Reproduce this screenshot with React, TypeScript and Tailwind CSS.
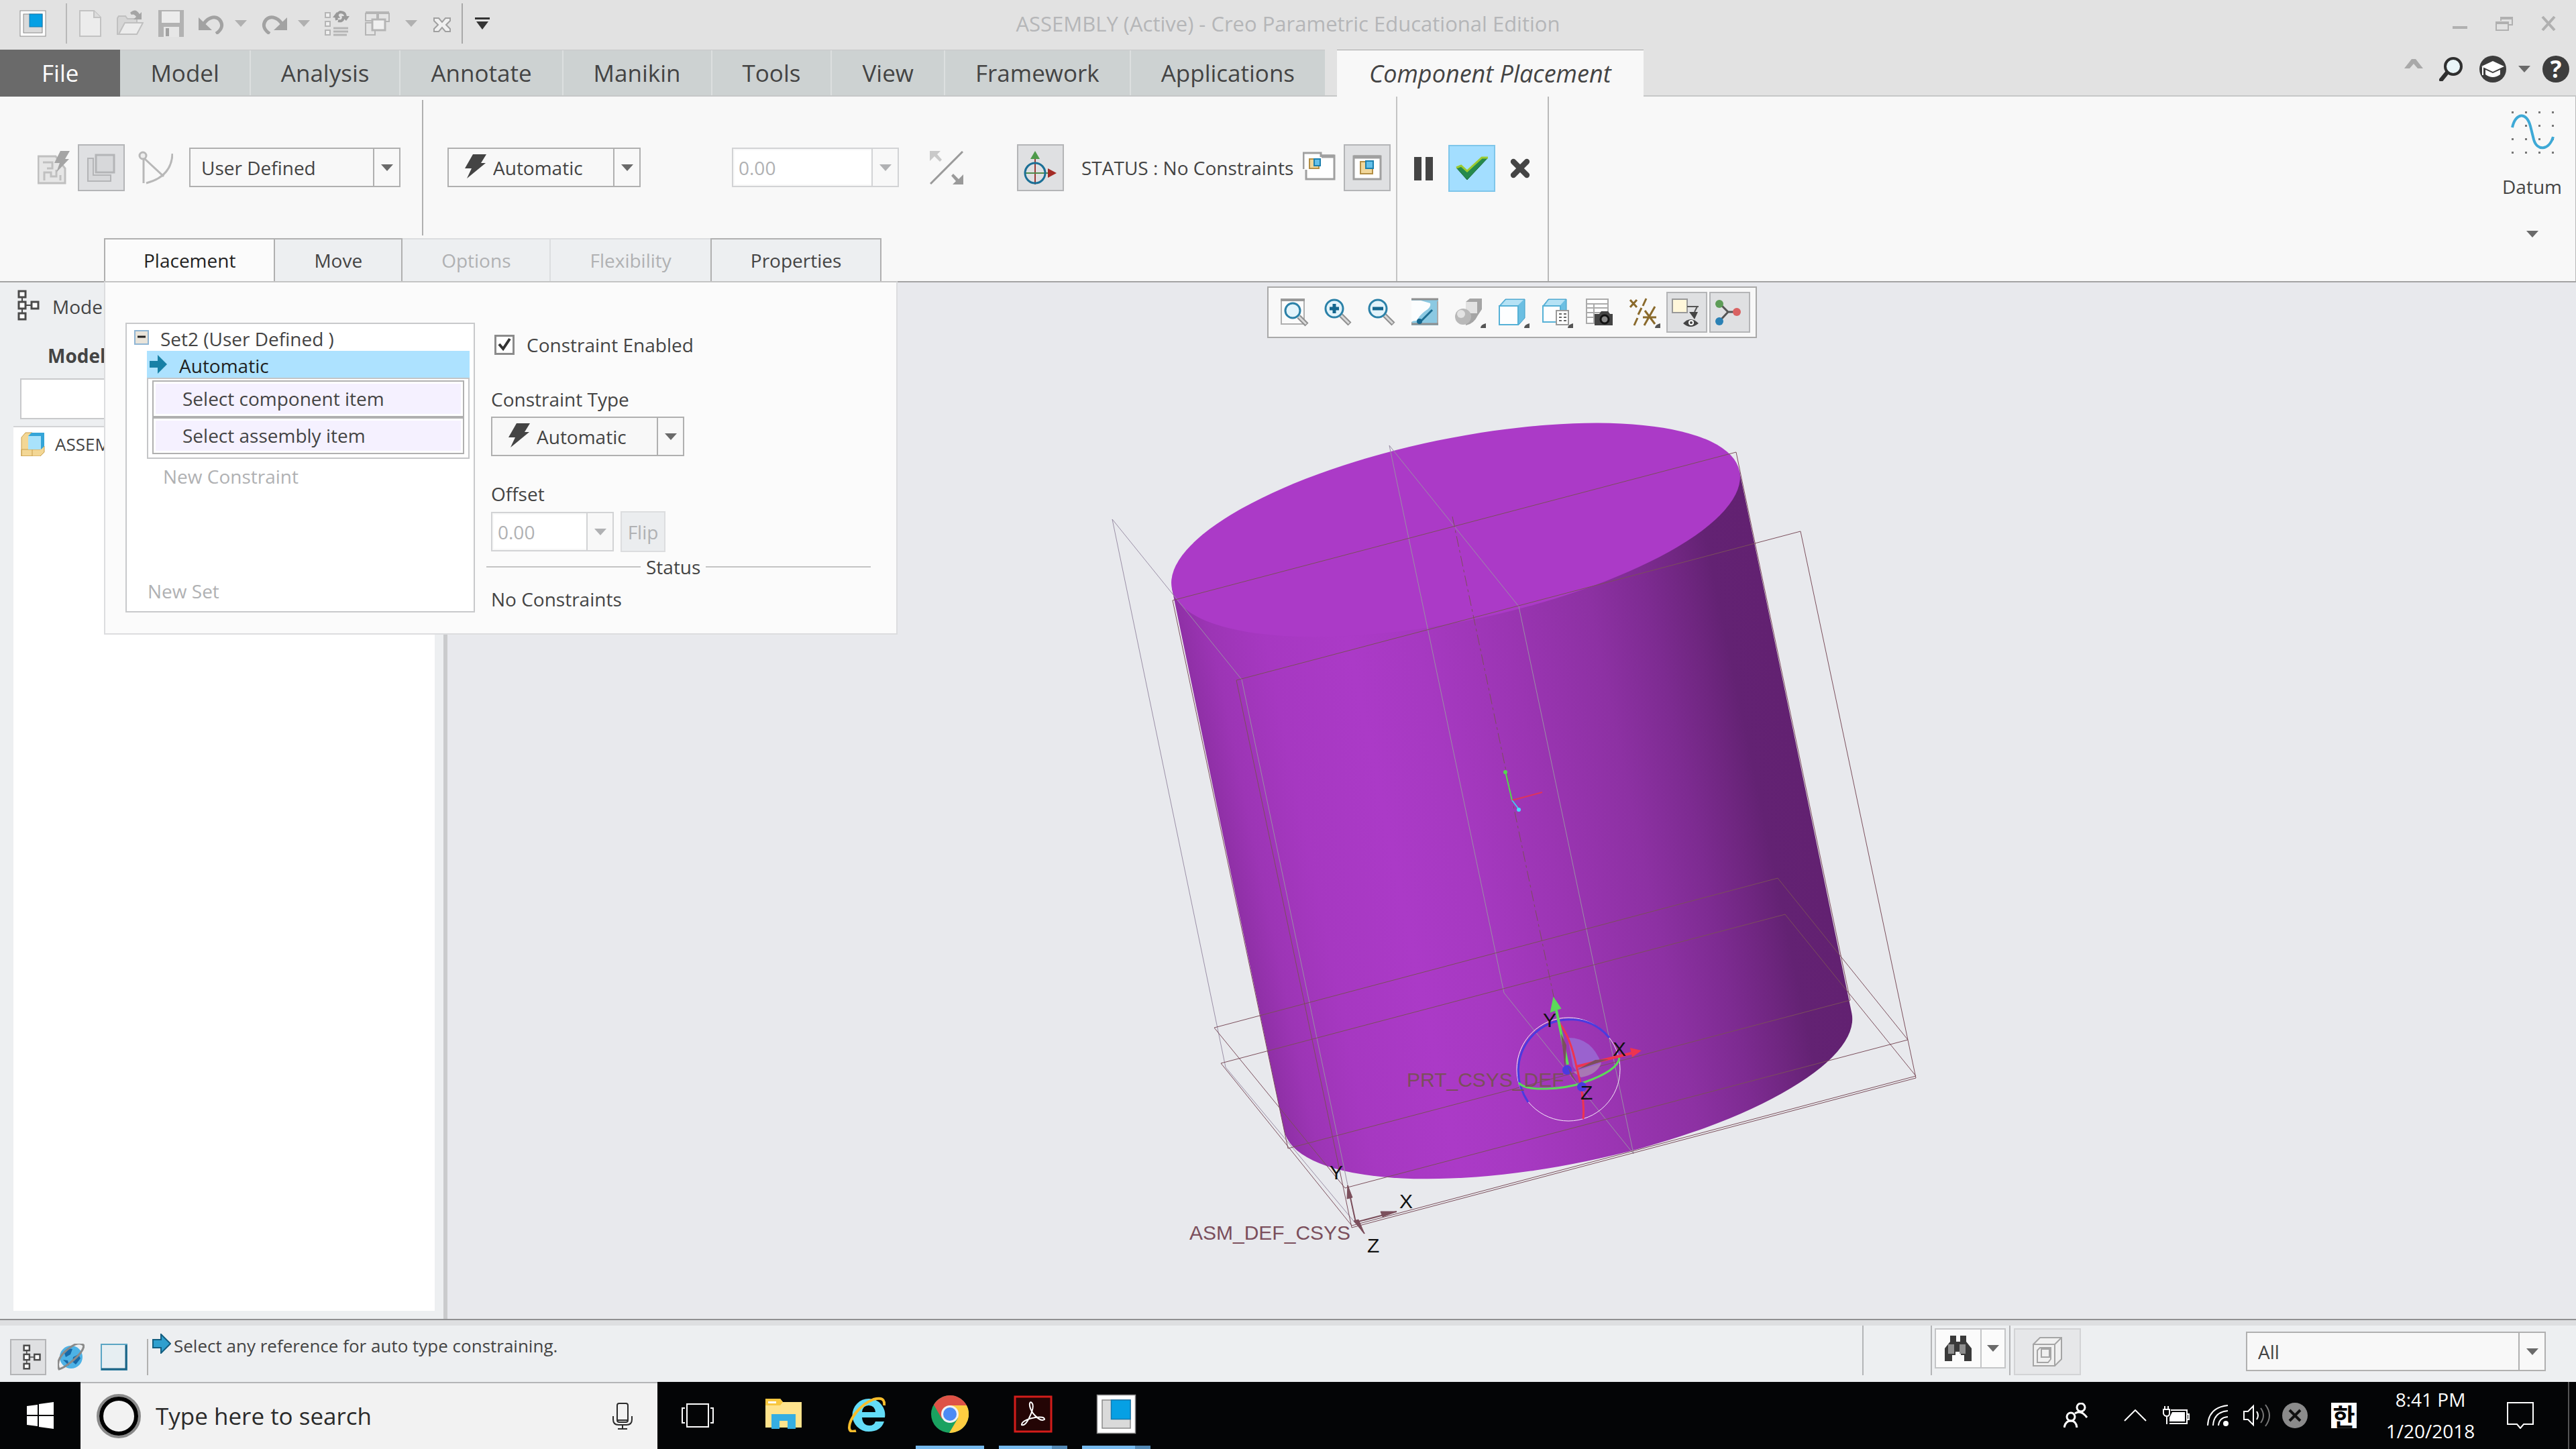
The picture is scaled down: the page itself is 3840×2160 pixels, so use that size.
import type { ReactNode } from 'react';
import { X } from 'lucide-react';

function Caret({ className = 'text-[#6a6a6a]' }: { className?: string }) {
  return (
    <svg viewBox="0 0 18 10" className={`w-[18px] h-[10px] shrink-0 ${className}`}>
      <path d="M0 0h18l-9 10z" fill="currentColor" />
    </svg>
  );
}

function Bolt() {
  return (
    <svg viewBox="0 0 32 36" className="w-8 h-9 shrink-0 mb-1">
      <path d="M12 0h20l-8 13h7L3 36l7-15H0z" fill="#444" />
    </svg>
  );
}

function CreoLogo({ className }: { className: string }) {
  return (
    <svg viewBox="0 0 40 40" className={className}>
      <rect x="1" y="1" width="38" height="38" fill="#fff" stroke="#8b8b8b" strokeWidth="1" />
      <rect x="6" y="6" width="28" height="28" fill="#dadada" stroke="#8a8a8a" strokeWidth="1" />
      <rect x="15" y="6" width="19" height="19" fill="#06a0e4" stroke="#147ab0" strokeWidth="1" />
    </svg>
  );
}

function TreeIcon({ className }: { className: string }) {
  return (
    <svg viewBox="0 0 34 46" className={className} fill="#fff" stroke="#4a4a4a" strokeWidth="3">
      <path d="M7 10v26M12 23h10" strokeWidth="2" />
      <rect x="2" y="2" width="10" height="9" />
      <rect x="2" y="18" width="10" height="10" />
      <rect x="21" y="18" width="10" height="10" />
      <rect x="2" y="35" width="10" height="9" />
    </svg>
  );
}

function Toggle({ label, children }: { label: string; children: ReactNode }) {
  return (
    <button aria-label={label} aria-pressed="true" className="w-[70px] h-[70px] shrink-0 flex items-center justify-center bg-[#dfe0e2] border-2 border-[#b4b5b7]">
      {children}
    </button>
  );
}

function Combo({ label, value, icon, className }: { label: string; value: string; icon?: ReactNode; className: string }) {
  return (
    <div className={`flex items-stretch h-[59px] shrink-0 bg-[#f8f8f8] border-2 border-[#b0b0b0] ${className}`}>
      <div className="flex flex-1 min-w-0 items-center gap-[10px]">
        {icon}
        <select aria-label={label} className="appearance-none flex-1 min-w-0 bg-transparent outline-none">
          <option>{value}</option>
        </select>
      </div>
      <span className="w-[39px] flex items-center justify-center border-l-2 border-[#b0b0b0]"><Caret /></span>
    </div>
  );
}

function NumberCombo({ label, className }: { label: string; className: string }) {
  return (
    <div className={`flex items-stretch h-[59px] shrink-0 bg-[#f8f8f8] border-2 border-[#d2d3d5] ${className}`}>
      <input aria-label={label} disabled defaultValue="0.00" className="flex-1 min-w-0 my-[2px] ml-[2px] bg-white pl-[6px] text-[#b0b1b3]" />
      <button disabled aria-label={`${label} history`} className="w-[39px] flex items-center justify-center border-l-2 border-[#d2d3d5]">
        <Caret className="text-[#b0b1b3]" />
      </button>
    </div>
  );
}

/* ---------- Title bar ---------- */

function TitleBar() {
  return (
    <header className="relative h-[74px] flex items-center bg-[#e2e2e2] pl-[29px] pr-[30px] pb-1">
      <CreoLogo className="w-10 h-10" />
      <span className="w-[2px] h-[60px] bg-[#b9b9b9] ml-[29px]" />
      <div className="flex items-center ml-[18px] gap-[22px]">
        <svg viewBox="0 0 34 40" className="w-[34px] h-10" fill="#ececec" stroke="#c2c2c2" strokeWidth="2">
          <path d="M1 1h21l10 10v28H1z" />
          <path d="M22 1v10h10" fill="#dcdcdc" />
        </svg>
        <svg viewBox="0 0 40 40" className="w-10 h-10" fill="#d6d6d6" stroke="#c0c0c0" strokeWidth="2">
          <path d="M1 37V12l2-3h10l3 4h14v8" />
          <path d="M3 36L12 19h27l-9 17z" fill="#ececec" />
          <path d="M20 4q8-8 14 2l3-3v11H25l4-4q-3-5-7-3z" fill="#a5a5a5" stroke="none" />
        </svg>
        <svg viewBox="0 0 38 40" className="w-[38px] h-10">
          <path d="M0 0h38v40H0z" fill="#b2b2b2" />
          <path d="M5 2h27v17H5z" fill="#ececec" />
          <path d="M8 25h23v15H8z" fill="#e6e6e6" />
          <path d="M11 27h5v12h-5z" fill="#a2a2a2" />
        </svg>
        <div className="flex items-center gap-4">
          <svg viewBox="0 0 38 28" className="w-[38px] h-7 mt-1">
            <path d="M8 12C16 1 26 1 31 6C38 14 34 22 26 27" fill="none" stroke="#a2a2a2" strokeWidth="5" />
            <path d="M0 3v19h20z" fill="#a2a2a2" />
          </svg>
          <Caret className="text-[#b0b0b0]" />
        </div>
        <div className="flex items-center gap-4">
          <svg viewBox="0 0 38 28" className="w-[38px] h-7 mt-1">
            <path d="M30 12C22 1 12 1 7 6C0 14 4 22 12 27" fill="none" stroke="#a2a2a2" strokeWidth="5" />
            <path d="M38 3v19H18z" fill="#a2a2a2" />
          </svg>
          <Caret className="text-[#b0b0b0]" />
        </div>
        <svg viewBox="0 0 38 38" className="w-[38px] h-[38px]" fill="none" stroke="#b5b5b5" strokeWidth="2">
          <path d="M1 3h7v7H1zM1 16h7v7H1zM1 29h7v7H1z" fill="#eee" />
          <path d="M13 26h22M13 31h22M13 36h20" strokeWidth="3" />
          <path d="M18 14q-2-9 5-12q7 0 8 6M20 15q8 2 8-7" strokeWidth="4" stroke="#999" />
          <path d="M12 10l6-8 5 9zM25 8h12l-5 7z" fill="#999" stroke="none" />
        </svg>
        <div className="flex items-center gap-[22px]">
          <svg viewBox="0 0 38 38" className="w-[38px] h-[38px]" fill="#e4e4e4" stroke="#b5b5b5" strokeWidth="2">
            <path d="M1 4h17v11H1zM20 4h16v12H20zM1 18h14v18H1z" />
            <path d="M1 3h35" strokeWidth="4" />
            <path d="M11 13h19v16H11z" strokeWidth="3" fill="#f0f0f0" />
          </svg>
          <Caret className="text-[#b0b0b0]" />
        </div>
        <svg viewBox="0 0 30 24" className="w-[30px] h-6 mt-1">
          <path d="M3 2h7l5 6 5-6h7v4l-6 6 6 6v4h-7l-5-6-5 6H3v-4l6-6-6-6z" fill="#f0f0f0" stroke="#a0a0a0" strokeWidth="2" />
        </svg>
      </div>
      <span className="w-[2px] h-[60px] bg-[#a9a9a9] ml-[14px]" />
      <button aria-label="Customize toolbar" className="ml-[18px]">
        <svg viewBox="0 0 22 18" className="w-[22px] h-[18px]">
          <path d="M0 0h22v3H0zM2 6h18l-9 12z" fill="#333" />
        </svg>
      </button>
      <h1 className="absolute inset-x-0 text-center text-[31px] text-[#b5b6b8] pointer-events-none">
        ASSEMBLY (Active) - Creo Parametric Educational Edition
      </h1>
      <div className="ml-auto flex items-center gap-[42px]">
        <button aria-label="Minimize"><svg viewBox="0 0 22 22" className="w-[22px] h-[22px]"><path d="M0 15h22v4H0z" fill="#b0b0b0" /></svg></button>
        <button aria-label="Restore">
          <svg viewBox="0 0 26 22" className="w-[26px] h-[22px]" fill="none" stroke="#b0b0b0" strokeWidth="2">
            <path d="M8 7V2h17v11h-5M8 4h17" /><path d="M1 9h18v12H1zM1 11h18" />
          </svg>
        </button>
        <button aria-label="Close"><svg viewBox="0 0 22 22" className="w-[22px] h-[22px]"><path d="M2 1l18 20M20 1L2 21" stroke="#b0b0b0" strokeWidth="4" /></svg></button>
      </div>
    </header>
  );
}

const MENUS = ['Model', 'Analysis', 'Annotate', 'Manikin', 'Tools', 'View', 'Framework', 'Applications'];

function MenuBar() {
  return (
    <nav className="h-[70px] flex items-stretch bg-[#e2e2e2] border-b-2 border-[#c6c7c8] text-[35px] text-[#444]">
      <button className="px-[62px] -mb-[2px] bg-[#6a6a6a] text-white">File</button>
      <div className="flex bg-[#cdd2d2] border-t border-[#c6c7c8]">
        {MENUS.map((menu) => (
          <button key={menu} className="px-[45px] border-r-2 border-[#dcdfdf] last:border-r-0">{menu}</button>
        ))}
      </div>
      <button className="ml-[18px] px-12 -mt-[1px] -mb-[2px] bg-[#f8f8f8] border-t-2 border-[#a5a5a5] italic text-[36px]">Component Placement</button>
      <div className="ml-auto pr-[10px] pb-[10px] flex items-center">
        <button aria-label="Collapse ribbon" className="mb-4">
          <svg viewBox="0 0 28 14" className="w-7 h-[14px]"><path d="M0 14L11 0h6l11 14h-8l-6-7-6 7z" fill="#a9a9a9" /></svg>
        </button>
        <button aria-label="Search" className="ml-6">
          <svg viewBox="0 0 36 36" className="w-9 h-9">
            <path d="M12 23L3 34" stroke="#2f2f2f" strokeWidth="6" strokeLinecap="round" />
            <circle cx="21" cy="14" r="12" fill="#e9f5f8" stroke="#2f2f2f" strokeWidth="4" />
          </svg>
        </button>
        <button aria-label="Learning" className="ml-6">
          <svg viewBox="0 0 40 40" className="w-10 h-10">
            <circle cx="20" cy="20" r="20" fill="#3d3d3d" />
            <path d="M3 16L20 8l17 8-17 8z" fill="#fff" />
            <path d="M9 21l11 5 11-5v7q-11 8-22 0zM4 17h2v12H4z" fill="#fff" />
          </svg>
        </button>
        <span className="ml-[18px] mr-[18px]"><Caret /></span>
        <button aria-label="Help" className="w-10 h-10 rounded-full bg-[#3d3d3d] text-white font-bold text-[35px] leading-10">?</button>
      </div>
    </nav>
  );
}

/* ---------- Ribbon ---------- */

function PlacementPanel() {
  return (
    <section aria-label="Placement" className="absolute z-10 left-0 top-full w-[1183px] h-[527px] flex gap-6 pl-[30px] pt-[60px] bg-[#fbfbfb] border-2 border-[#dcdddf] border-t-[#c4c4c4]">
      <div className="w-[521px] h-[432px] flex flex-col bg-white border-2 border-[#c8c9cb]">
        <div className="h-[40px] flex items-center pl-[11px] gap-[17px]">
          <svg viewBox="0 0 22 22" className="w-[22px] h-[22px]">
            <rect x="1" y="1" width="20" height="20" fill="#e9e4da" stroke="#8fb5d4" strokeWidth="2" />
            <path d="M5 10h12" stroke="#222" strokeWidth="3" />
          </svg>
          <span className="pt-1">Set2 (User Defined )</span>
        </div>
        <div className="ml-[30px] mr-[6px]">
          <div className="h-10 flex items-center gap-[18px] pl-1 bg-[#ade2ff] text-[#222]">
            <svg viewBox="0 0 26 28" className="w-[26px] h-7"><path d="M0 9h12V0l14 14-14 14v-9H0z" fill="#1880a6" /></svg>
            <span className="pt-1">Automatic</span>
          </div>
          <div className="border-2 border-[#c4c5c7] px-[6px] pt-[2px] pb-[5px]">
            {['Select component item', 'Select assembly item'].map((item) => (
              <button key={item} className="block w-full h-[55px] p-[3px] border-2 border-[#b0b0b0] text-left">
                <span className="block h-full bg-[#f5f1ff] pl-10 leading-[44px]">{item}</span>
              </button>
            ))}
          </div>
        </div>
        <p className="mt-[6px] pl-[54px] text-[#b0b1b3]">New Constraint</p>
        <p className="mt-auto mb-[10px] pl-[31px] text-[#b0b1b3]">New Set</p>
      </div>
      <div className="w-[566px] pt-[13px]">
        <label className="h-10 flex items-center gap-[18px] pl-[5px]">
          <span className="grid">
            <input type="checkbox" defaultChecked className="appearance-none col-start-1 row-start-1 w-[30px] h-[30px] bg-white border-[3px] border-[#8b8b8b]" />
            <svg viewBox="0 0 30 30" className="col-start-1 row-start-1 w-[30px] h-[30px] pointer-events-none"><path d="M7 14l6 7L23 6" fill="none" stroke="#333" strokeWidth="4" /></svg>
          </span>
          Constraint Enabled
        </label>
        <p className="mt-[41px] h-10 leading-10">Constraint Type</p>
        <Combo label="Constraint Type" value="Automatic" icon={<Bolt />} className="mt-[6px] w-72 pl-6" />
        <p className="mt-9 h-10 leading-10">Offset</p>
        <div className="mt-[6px] flex items-center gap-[10px]">
          <NumberCombo label="Offset" className="w-[183px]" />
          <button disabled className="w-[67px] h-[61px] bg-[#ebedef] border-2 border-[#dcdddf] text-[#b0b1b3]">Flip</button>
        </div>
        <div className="-ml-[7px] h-10 mt-[2px] flex items-center gap-2">
          <span className="h-[2px] w-[230px] bg-[#c4c4c4]" />
          Status
          <span className="h-[2px] flex-1 bg-[#c4c4c4]" />
        </div>
        <p className="mt-2 h-10 leading-10">No Constraints</p>
      </div>
    </section>
  );
}

function Ribbon() {
  return (
    <div className="h-[277px] shrink-0 flex bg-[#f8f8f8] border-b-2 border-[#a3a3a3]">
      <div>
        <div className="h-[211px] flex items-center pl-14 pr-2">
          <svg viewBox="0 0 48 50" className="w-12 h-[50px] shrink-0" fill="#e6e6e6" stroke="#c0c0c0" strokeWidth="3">
            <path d="M1 8h26l14 18v22H1z" />
            <path d="M8 17h14v9h-8M10 44V32h10v6h8V28M34 44v-8" fill="none" />
            <path d="M34 0h14l-7 12h6L28 32l5-14h-8z" fill="#a5a5a5" stroke="none" />
          </svg>
          <div className="ml-3">
            <Toggle label="Interface placement">
              <svg viewBox="0 0 44 44" className="w-11 h-11" fill="#d7d8da" stroke="#b4b5b7" strokeWidth="2">
                <path d="M2 8h8v25h26v9H2z" /><path d="M14 3h27v26H14z" strokeWidth="3" />
              </svg>
            </Toggle>
          </div>
          <svg viewBox="0 0 52 50" className="ml-5 w-[52px] h-[50px] shrink-0" fill="none" stroke="#b8b8b8" strokeWidth="3">
            <circle cx="7" cy="7" r="5" fill="#eee" /><path d="M8 12v36M10 12l28 26M51 4Q50 38 12 48" />
          </svg>
          <Combo label="Connection type" value="User Defined" className="ml-6 w-[315px] pl-4" />
          <span className="ml-8 w-[2px] h-[202px] bg-[#b0b0b0]" />
          <Combo label="Constraint" value="Automatic" icon={<Bolt />} className="ml-9 w-72 pl-6" />
          <NumberCombo label="Constraint offset" className="ml-34 w-[249px]" />
          <svg viewBox="0 0 50 50" className="ml-[46px] w-[50px] h-[50px] shrink-0">
            <path d="M1 49L49 1" stroke="#9a9a9a" strokeWidth="3" />
            <path d="M0 0h16l-5 5 7 8-3 3-8-8-7 7z" fill="#c9c9c9" />
            <path d="M50 50H34l5-5-7-8 3-3 8 8 7-7z" fill="#9a9a9a" />
          </svg>
          <div className="ml-20">
            <Toggle label="Show 3D dragger">
              <svg viewBox="0 0 50 50" className="w-[50px] h-[50px]" fill="none" strokeWidth="3">
                <path d="M17 10v40" stroke="#9a3a33" strokeWidth="2" /><path d="M2 33h36" stroke="#4f8a4b" strokeWidth="2" />
                <circle cx="17" cy="33" r="15" stroke="#1b6f96" />
                <path d="M17 0l7 12H10z" fill="#4f9a4b" /><path d="M49 33l-13-7v14z" fill="#a32b25" />
              </svg>
            </Toggle>
          </div>
          <span className="ml-[26px] whitespace-nowrap">STATUS : No Constraints</span>
          <button aria-label="Separate window" className="ml-[14px] mb-[6px] shrink-0">
            <svg viewBox="0 0 49 44" className="w-[49px] h-11" fill="#fff" stroke="#a0a0a0" strokeWidth="3">
              <path d="M5 7h42v35H5z" /><path d="M25 8h22" strokeWidth="5" /><path d="M2 2h26v26H2z" stroke="none" /><path d="M1 27V3h26v6" />
              <path d="M10 12h14v14H10z" fill="#f1d79a" stroke="#b48f45" strokeWidth="2" /><path d="M17 12h9v10h-9z" fill="#63c0ea" stroke="#1b7fae" strokeWidth="2" />
            </svg>
          </button>
          <div className="ml-3">
            <Toggle label="Show in assembly window">
              <svg viewBox="0 0 44 40" className="w-11 h-10" fill="#fff" stroke="#a0a0a0" strokeWidth="3">
                <path d="M2 3h40v34H2z" /><path d="M2 4h40" strokeWidth="5" />
                <path d="M12 11h18v18H12z" fill="#f1d79a" stroke="#b48f45" strokeWidth="2" /><path d="M20 10h11v11H20z" fill="#63c0ea" stroke="#1b7fae" strokeWidth="2" />
              </svg>
            </Toggle>
          </div>
        </div>
        <div className="relative ml-[155px] h-16 flex w-fit">
          <button className="px-[57px] bg-[#fbfbfb] border-2 border-r-0 border-b-0 border-[#b0b0b0] text-[#222]">Placement</button>
          <button className="px-[58px] bg-[#edeff1] border-2 border-b-0 border-[#b0b0b0]">Move</button>
          <button disabled className="px-[58px] bg-[#edeff1] border-t-2 border-r-2 border-[#dcdddf] text-[#b0b1b3]">Options</button>
          <button disabled className="px-[58px] bg-[#edeff1] border-t-2 border-[#dcdddf] text-[#b0b1b3]">Flexibility</button>
          <button className="px-[58px] bg-[#edeff1] border-2 border-b-0 border-[#b0b0b0]">Properties</button>
          <PlacementPanel />
        </div>
      </div>
      <div className="w-[226px] border-l-2 border-[#c4c4c4] flex items-start pt-[72px] pl-[25px]">
        <button aria-label="Pause" className="h-[70px] w-7 flex items-center justify-between"><span className="w-[11px] h-[35px] bg-[#444]" /><span className="w-[11px] h-[35px] bg-[#444]" /></button>
        <button aria-label="Accept" className="ml-[23px] w-[70px] h-[70px] flex items-center justify-center bg-[#a3deff] border-2 border-[#7fc6ea]">
          <svg viewBox="0 0 50 36" className="w-[50px] h-9">
            <path d="M2 17l7-3 9 8L40 2h9L18 35z" fill="#258a4c" stroke="#1c6b3a" strokeWidth="1" />
            <path d="M2 17l7-3 9 8L40 2h9" fill="none" stroke="#9ccb2f" strokeWidth="3" />
          </svg>
        </button>
        <button aria-label="Cancel" className="ml-[17px] h-[70px]"><X className="w-10 h-10" strokeWidth={5} color="#444" /></button>
      </div>
      <div className="flex-1 flex justify-end border-l-2 border-r border-[#b9b9b9]">
        <button className="mr-5 pt-5 h-[220px] flex flex-col items-center">
          <svg viewBox="0 0 66 66" className="w-[66px] h-[66px]">
            {[2, 22, 42, 62].map((y) => [2, 22, 42, 62].map((x) => <rect key={`${x}-${y}`} x={x} y={y} width="3" height="3" fill="#777" />))}
            <path d="M3 26C8 4 24 2 30 24l5 20C40 62 58 60 64 40" fill="none" stroke="#3ea9d6" strokeWidth="4" />
          </svg>
          <span className="mt-7">Datum</span>
          <span className="mt-[46px]"><Caret /></span>
        </button>
      </div>
    </div>
  );
}

/* ---------- Work area ---------- */

function ModelTree() {
  return (
    <aside className="w-[667px] shrink-0 flex flex-col pl-5 pr-[13px] pt-[10px] pb-3 bg-[#edeff1] border-r-[6px] border-[#cacbcd]">
      <div className="h-12 flex items-center gap-[18px] pl-[6px]">
        <TreeIcon className="w-[34px] h-[46px]" />
        <span className="pt-1">Model</span>
      </div>
      <p className="mt-[31px] h-10 leading-10 pl-[51px] font-bold">Model</p>
      <input aria-label="Search tree" className="mt-[14px] ml-[10px] w-[560px] h-[61px] bg-white border-2 border-[#c8c9cb]" />
      <div className="mt-[10px] flex-1 bg-white border-t-2 border-[#d2d3d5] pl-[11px] pt-[5px]">
        <div className="flex items-center gap-[15px]">
          <svg viewBox="0 0 36 36" className="w-9 h-9">
            <path d="M1 8l6-7h10v35H1zM1 26h28l6-5v9l-6 6H1z" fill="#f3d795" stroke="#c99f4c" strokeWidth="1" />
            <path d="M11 6l5-5h19v20l-5 5H11z" fill="#35a5d8" /><path d="M11 6h19v20H11z" fill="#a9e2fb" />
          </svg>
          <span className="text-[26px]">ASSEM</span>
        </div>
      </div>
    </aside>
  );
}

function Lens({ children }: { children?: ReactNode }) {
  return (
    <>
      <path d="M25 25l13 13" stroke="#8f8f8f" strokeWidth="7" />
      <path d="M25 25l12 12" stroke="#d9d9d9" strokeWidth="3" />
      <circle cx="15" cy="15" r="13" fill="#e3f4fb" stroke="#2b81a8" strokeWidth="3" />
      {children}
    </>
  );
}

function ViewButton({ label, children, more, on }: { label: string; children: ReactNode; more?: boolean; on?: boolean }) {
  return (
    <button aria-label={label} className={`h-[61px] flex items-center justify-center ${on ? 'w-[61px] bg-[#dfe0e2] border-2 border-[#b4b5b7]' : 'w-[65px]'}`}>
      <svg viewBox="0 0 46 46" className="w-[46px] h-[46px] shrink-0">
        <g transform="translate(0 2)">{children}</g>
        {more && <path d="M46 39v7h-8q0-5 8-7z" fill="#555" />}
      </svg>
    </button>
  );
}

function GraphicsToolbar() {
  return (
    <div className="absolute left-[1222px] top-[6px] h-[77px] flex items-center pl-[8px] pr-[8px] bg-[#f8f8f8] border-2 border-[#a9a9a9]">
      <ViewButton label="Refit">
        <path d="M1 2h34v36H1z" fill="#fbfbfb" stroke="#b0b0b0" strokeWidth="2" /><path d="M0 2h36" stroke="#999" strokeWidth="4" />
        <path d="M27 27l12 12" stroke="#8f8f8f" strokeWidth="7" /><path d="M27 27l11 11" stroke="#d9d9d9" strokeWidth="3" />
        <circle cx="18" cy="18" r="11" fill="#e3f4fb" stroke="#2b81a8" strokeWidth="3" />
      </ViewButton>
      <ViewButton label="Zoom In"><Lens><path d="M8 15h14M15 8v14" stroke="#15678f" strokeWidth="5" /></Lens></ViewButton>
      <ViewButton label="Zoom Out"><Lens><path d="M7 15h16" stroke="#15678f" strokeWidth="5" /></Lens></ViewButton>
      <ViewButton label="Repaint">
        <path d="M0 0h40v40H0z" fill="#8bc9e2" /><path d="M0 4h1v33H0zM38 4h2v33h-2z" fill="#aaa" /><path d="M0 3v32q2-2 8-2 4-8 12-14 10-6 8-12l-14-4z" fill="#fbfdfe" />
        <path d="M0 1h40M0 38h40" stroke="#8f8f8f" strokeWidth="3" /><path d="M31 17L15 33" stroke="#1c6e92" strokeWidth="3" /><circle cx="12" cy="34" r="4" fill="#15678f" />
      </ViewButton>
      <ViewButton label="Rendering Options" more>
        <path d="M16 5L22 0h18v16l-6 9q-6 13-18 15z" fill="#a5a5a5" /><path d="M16 5h17v17H20q-4-3-4-8z" fill="#e2e2e2" />
        <circle cx="12" cy="27" r="12" fill="#b9b9b9" /><circle cx="9" cy="23" r="6" fill="#e3e3e3" />
      </ViewButton>
      <ViewButton label="Display Style" more>
        <path d="M1 11L10 1h29v28l-9 10H1z" fill="#6cbfe2" stroke="#3c9cc6" strokeWidth="1" /><path d="M4 10l7-8h26l-8 8z" fill="#b5e2f5" /><path d="M1 11h28v28H1z" fill="#fdfeff" stroke="#56b1d6" strokeWidth="2" />
      </ViewButton>
      <ViewButton label="Saved Orientations" more>
        <path d="M1 11L9 1h27v22l-9 10H1z" fill="#6cbfe2" stroke="#3c9cc6" strokeWidth="1" /><path d="M4 10l6-8h24l-7 8z" fill="#b5e2f5" /><path d="M1 11h26v24H1z" fill="#fdfeff" stroke="#56b1d6" strokeWidth="2" />
        <path d="M21 18h18v21H21z" fill="#fff" stroke="#999" strokeWidth="2" /><path d="M25 23h4M25 28h4M25 33h4M32 23h4M32 28h4M32 33h4" stroke="#666" strokeWidth="2" />
      </ViewButton>
      <ViewButton label="View Manager">
        <path d="M1 1h32v36H1zM1 8h32M1 14h32M1 21h32M1 28h32M12 8v29" fill="#fff" stroke="#aaa" strokeWidth="2" />
        <path d="M13 23h7l3-4h10l3 4h4v17H13z" fill="#444" /><circle cx="28" cy="31" r="6" fill="#888" stroke="#111" strokeWidth="3" />
      </ViewButton>
      <ViewButton label="Datum Display Filters" more>
        <path d="M1 2l10 11M11 2L1 13M25 0l-5 11M18 14l-5 10M12 29L7 40M38 12L22 40M23 18l15 20M20 28h20" stroke="#8a6a2c" strokeWidth="3" fill="none" />
      </ViewButton>
      <div className="flex gap-[3px]">
        <ViewButton label="Annotation Display" on>
          <path d="M1 1h22v20H1z" fill="#fff7da" stroke="#999" strokeWidth="2" /><path d="M23 12h17M38 12l-4 8" fill="none" stroke="#555" strokeWidth="2" /><path d="M26 20h13l-5 11z" fill="#444" />
          <path d="M17 37q11-12 23 0-12 10-23 0z" fill="#444" /><circle cx="29" cy="36" r="4" fill="#fff" /><circle cx="29" cy="36" r="2" fill="#444" />
        </ViewButton>
        <ViewButton label="Spin Center" on>
          <path d="M8 8l12 12h14M20 20L7 34" fill="none" stroke="#555" strokeWidth="3" />
          <circle cx="7" cy="8" r="6" fill="#5d9c57" /><circle cx="33" cy="20" r="6" fill="#d96262" /><circle cx="7" cy="34" r="6" fill="#2b81b5" />
        </ViewButton>
      </div>
    </div>
  );
}

function Viewport() {
  return (
    <main className="relative flex-1 min-w-0 bg-[#e8e9ed]">
      <svg viewBox="667 421 3173 1545" className="w-full h-full font-['Liberation_Sans',sans-serif]" role="img" aria-label="Cylinder in assembly">
        <defs>
          <linearGradient id="side" x1="0" x2="1" y1="0" y2="0">
            <stop offset="0" stopColor="#8f30a6" />
            <stop offset="0.05" stopColor="#9c35b5" />
            <stop offset="0.14" stopColor="#a638c1" />
            <stop offset="0.28" stopColor="#ab3ac7" />
            <stop offset="0.4" stopColor="#a639c1" />
            <stop offset="0.55" stopColor="#9b35b3" />
            <stop offset="0.7" stopColor="#8d31a3" />
            <stop offset="0.8" stopColor="#7d2b91" />
            <stop offset="0.87" stopColor="#6f2680" />
            <stop offset="0.92" stopColor="#632273" />
            <stop offset="1" stopColor="#622171" />
          </linearGradient>
        </defs>
        <g transform="translate(2170 790) rotate(-11.7)">
          <path d="M-432 0V825A432 136 0 0 0 432 825V0z" fill="url(#side)" />
          <ellipse rx="432" ry="136" fill="#ab3ac7" />
          <path d="M-434 8V825M434 0V825" stroke="#f3eaf4" strokeWidth="1" />
        </g>
        {/* datum planes */}
        <g fill="none" stroke="#9a8fa6" strokeWidth="1">
          <path d="M1658 774L1851 1013L2021 1824L1827 1591z" />
          <path d="M2071 664L2264 904L2435 1720L2242 1480z" />
        </g>
        <g fill="none" stroke="#7b4f5c" strokeWidth="1">
          <path d="M1843 1014L2684 792L2856 1607L2015 1830z" />
          <path d="M1748 895L2588 674L2758 1491L1920 1712z" />
          <path d="M1810 1532L2650 1309L2844 1550L2005 1771z" />
          <path d="M1820 1585L2661 1363L2856 1604L2015 1827z" />
          <path d="M2165 770L2317 1490" strokeDasharray="16 5 4 5" />
        </g>
        {/* spin center */}
        <path d="M2244 1150L2254 1193" stroke="#55d94f" strokeWidth="2" />
        <path d="M2254 1193L2299 1181" stroke="#e0345a" strokeWidth="2" />
        <path d="M2254 1193L2264 1206" stroke="#45c8f0" strokeWidth="2" />
        <circle cx="2244" cy="1151" r="3" fill="#55d94f" />
        <circle cx="2264" cy="1207" r="3" fill="#45e0ff" />
        {/* dragger */}
        <path d="M2337 1547Q2372 1546 2387 1585L2357 1606L2345 1590z" fill="#9a62cf" />
        <path d="M2345 1598L2387 1585Q2380 1602 2357 1606z" fill="#a878b4" />
        <circle cx="2338" cy="1594" r="77" fill="none" stroke="#f6ecfa" strokeWidth="1" />
        <path d="M2278 1643C2256 1610 2258 1568 2289 1539C2320 1512 2370 1512 2399 1547" fill="none" stroke="#4a3be0" strokeWidth="3" />
        <path d="M2323 1523Q2341 1545 2350 1590Q2363 1640 2360 1668" fill="none" stroke="#ee3450" strokeWidth="3" />
        <path d="M2264 1614C2275 1628 2330 1624 2360 1614Q2412 1596 2414 1577" fill="none" stroke="#5cd95a" strokeWidth="3" />
        <path d="M2337 1587L2320 1506" stroke="#5cd95a" strokeWidth="4" />
        <path d="M2316 1488L2326 1503L2312 1508z" fill="#5cd95a" stroke="#5cd95a" strokeWidth="2" />
        <path d="M2350 1590L2432 1570" stroke="#ee3450" strokeWidth="4" />
        <path d="M2447 1566L2430 1562L2433 1576z" fill="#ee3450" />
        <path d="M2333 1593L2327 1541L2335 1558zM2350 1595L2398 1579L2378 1580z" fill="#7b4f5c" />
        <circle cx="2336" cy="1595" r="7" fill="#4a3be0" />
        <path d="M2337 1590L2342 1604L2352 1616z" fill="#7b4f5c" />
        <circle cx="2358" cy="1620" r="7" fill="#4a3be0" />
        {/* assembly csys */}
        <g fill="#7b4f5c" stroke="#7b4f5c">
          <path d="M2021 1822L2009 1767M2021 1822L2082 1806M2021 1822L2034 1839" strokeWidth="2" />
          <path d="M2009 1767L2008 1787L2016 1785zM2082 1806L2058 1806L2061 1814zM2034 1839L2018 1820L2025 1818z" strokeWidth="1" />
        </g>
        <g fontSize="30" fill="#7b4f5c">
          <text x="2097" y="1620">PRT_CSYS_DEF</text>
          <text x="1773" y="1848">ASM_DEF_CSYS</text>
        </g>
        <g fontSize="30" fill="#111">
          <text x="2300" y="1531">Y</text>
          <text x="2404" y="1574">X</text>
          <text x="2356" y="1639">Z</text>
          <text x="1982" y="1758">Y</text>
          <text x="2086" y="1801">X</text>
          <text x="2038" y="1867">Z</text>
        </g>
      </svg>
      <GraphicsToolbar />
    </main>
  );
}

/* ---------- Status bar ---------- */

function StatusBar() {
  return (
    <footer className="h-[94px] shrink-0 flex bg-[#edeff1] border-t-2 border-[#8f8f91]">
      <div className="flex-1 flex items-start border-t-8 border-[#dedfe1]">
        <button aria-label="Show navigator" className="mt-5 ml-[15px] w-[54px] h-[54px] flex items-center justify-center bg-[#dfe0e2] border-2 border-[#b4b5b7]">
          <TreeIcon className="w-7 h-10 ml-3" />
        </button>
        <svg viewBox="0 0 40 40" className="mt-[27px] ml-[17px] w-10 h-10">
          <circle cx="20" cy="20" r="17" fill="#4db2e6" />
          <path d="M10 14q6-8 12-6l-3 8-7 4zM23 20l8-4 3 6-7 9-5-4zM8 24l7 1 2 8z" fill="#1669a8" />
          <path d="M2 38Q-4 24 14 9T39 3Q38 12 24 24T2 38z" fill="none" stroke="#8a8a8a" strokeWidth="3" />
        </svg>
        <svg viewBox="0 0 40 40" className="mt-[27px] ml-6 w-10 h-10"><path d="M1 1h38v38H1z" fill="#e6eef2" stroke="#5aa5c4" strokeWidth="2" /><path d="M1 38h37V2" fill="none" stroke="#1b6486" strokeWidth="3" /></svg>
        <span className="mt-5 ml-[29px] w-[2px] h-[54px] bg-[#b0b0b0]" />
        <svg viewBox="0 0 28 30" className="mt-3 ml-[6px] w-7 h-[30px]"><path d="M1 9h12V1l14 14-14 14v-8H1z" fill="#2f9fce" stroke="#135e80" strokeWidth="2" /></svg>
        <p className="mt-[10px] ml-1 text-[26px] leading-10">Select any reference for auto type constraining.</p>
        <div className="ml-auto flex items-start">
          <span className="w-[2px] h-[74px] bg-[#b4b5b7]" />
          <span className="ml-[100px] w-[2px] h-[74px] bg-[#b4b5b7]" />
          <button aria-label="Find" className="mt-1 ml-1 w-[106px] h-[60px] flex bg-[#fbfbfb] border-2 border-[#c4c5c7]">
            <span className="flex-1 h-full flex items-center justify-center border-r-2 border-[#c4c5c7]">
              <svg viewBox="0 0 40 38" className="w-10 h-[38px]">
                <path d="M8 0h9v9h6V0h9v9l8 10v19H29v-9h-5v-5h-8v5h-5v9H0V19L8 9z" fill="#3a3a3a" />
                <path d="M5 13h9v14H5zM22 13h9v14h-9z" fill="#8f8f8f" />
              </svg>
            </span>
            <span className="w-[34px] h-full flex items-center justify-center"><Caret /></span>
          </button>
          <span className="ml-[5px] w-[2px] h-[74px] bg-[#b4b5b7]" />
          <button aria-label="Select box" className="mt-1 ml-[5px] w-[100px] h-[70px] flex items-center justify-center bg-[#e6e7e9] border-2 border-[#d2d3d5]">
            <svg viewBox="0 0 44 44" className="w-11 h-11" fill="#f0f0f0" stroke="#a5a5a5" strokeWidth="2">
              <path d="M1 11L11 1h32v32L33 43H1z" /><path d="M1 11h32v32H1zM33 11L43 1M7 20l4-4h16v17l-4 5H7z" /><path d="M13 18h12v12H13z" />
            </svg>
          </button>
          <Combo label="Selection filter" value="All" className="mt-[9px] ml-[246px] mr-[45px] w-[447px] pl-4" />
        </div>
      </div>
    </footer>
  );
}

/* ---------- Taskbar ---------- */

function TaskButton({ label, children, bar }: { label: string; children: ReactNode; bar?: 'one' | 'many' }) {
  return (
    <button aria-label={label} className="w-[124px] h-full flex flex-col items-center">
      <span className="flex-1 flex items-center">{children}</span>
      <span className={`h-[5px] w-[102px] flex justify-end ${bar ? 'bg-[#76b9ed]' : ''}`}>{bar === 'many' && <span className="w-[23px] h-full bg-[#5288b4]" />}</span>
    </button>
  );
}

function Taskbar() {
  return (
    <div className="h-[100px] shrink-0 flex items-stretch bg-[#040506] text-white">
      <button aria-label="Start" className="w-[120px] flex items-center justify-center">
        <svg viewBox="0 0 40 40" className="w-10 h-10"><path d="M0 6l16-2v15H0zM18 3l22-3v19H18zM0 21h16v15L0 34zM18 21h22v19l-22-3z" fill="#fff" /></svg>
      </button>
      <label className="w-[860px] flex items-center pl-6 pr-[37px] bg-[#f2f2f2] border-t-2 border-[#b4b5b7] text-[#2b2b2b]">
        <svg viewBox="0 0 66 66" className="w-[66px] h-[66px] shrink-0">
          <circle cx="33" cy="33" r="31" fill="none" stroke="#8a8a8a" strokeWidth="4" /><circle cx="33" cy="33" r="26" fill="none" stroke="#000" strokeWidth="6" />
        </svg>
        <input aria-label="Search" placeholder="Type here to search" className="ml-[22px] flex-1 min-w-0 text-[35px] outline-none placeholder:text-[#2b2b2b]" />
        <svg viewBox="0 0 30 40" className="w-[30px] h-10" fill="none" stroke="#2b2b2b" strokeWidth="2"><rect x="7" y="1" width="16" height="28" rx="3" /><path d="M1 20v5q0 8 8 8h12q8 0 8-8v-5M15 33v6M8 39h14M7 26h16" /></svg>
      </label>
      <button aria-label="Task view" className="w-[120px] flex items-center justify-center">
        <svg viewBox="0 0 48 38" className="w-12 h-[38px]" fill="none" stroke="#fff" strokeWidth="2"><path d="M8 2h32v34H8zM5 8H1v22h4M43 8h4v22h-4" /></svg>
      </button>
      <div className="flex pl-[6px]">
        <TaskButton label="File Explorer">
          <svg viewBox="0 0 54 46" className="w-[54px] h-[46px]"><path d="M0 0h22l4 5h28v38H0z" fill="#ffe38c" /><path d="M0 0h22l4 5-4 5H0z" fill="#f8c740" /><path d="M4 4h12v3H4z" fill="#fff" /><path d="M9 45V23h36v22H33V33H21v12z" fill="#36aee2" /></svg>
        </TaskButton>
        <TaskButton label="Internet Explorer">
          <svg viewBox="0 0 56 54" className="w-14 h-[54px]">
            <path d="M31 4a24 24 0 0 1 24 28H21q1 12 11 12 7 0 9-6h13q-5 15-23 15A24 24 0 0 1 31 4zm0 10q-9 0-10 10h20q-1-10-10-10z" fill="#63dcf8" />
            <path d="M54 14Q56 0 38 5C18 13 2 34 2 47q0 8 10 5" fill="none" stroke="#f6bd2c" strokeWidth="4" />
          </svg>
        </TaskButton>
        <TaskButton label="Chrome" bar="one">
          <svg viewBox="0 0 56 56" className="w-14 h-14">
            <circle cx="28" cy="28" r="28" fill="#1aa260" /><path d="M4 14A28 28 0 0 1 53 15H28L16 35z" fill="#de5246" />
            <path d="M28 15h25A28 28 0 0 1 27 56l13-22z" fill="#ffcd41" /><circle cx="28" cy="28" r="13" fill="#f1f1f1" /><circle cx="28" cy="28" r="10" fill="#4b8bf5" />
          </svg>
        </TaskButton>
        <TaskButton label="Acrobat" bar="many">
          <svg viewBox="0 0 58 56" className="w-[58px] h-14"><path d="M2 2h54v52H2z" fill="#240505" stroke="#d31d1a" strokeWidth="3" /><path d="M27 11q5 5-4 23-6 12-11 10 0-7 20-11 14-2 14 3-6 4-17-9-6-9-5-15 1-3 3-1z" fill="none" stroke="#fff" strokeWidth="2" /></svg>
        </TaskButton>
        <TaskButton label="Creo Parametric" bar="many"><CreoLogo className="w-[60px] h-[60px]" /></TaskButton>
      </div>
      <div className="ml-auto flex items-center">
        <svg viewBox="0 0 36 38" className="w-9 h-[38px]" fill="none" stroke="#fff" strokeWidth="3"><circle cx="26" cy="7" r="6" /><path d="M17 16q9-6 18 6" /><circle cx="11" cy="21" r="6" /><path d="M1 37q2-10 10-10t9 10" /></svg>
        <svg viewBox="0 0 34 18" className="ml-[54px] w-[34px] h-[18px]" fill="none" stroke="#fff" strokeWidth="2"><path d="M1 17L17 1l16 16" /></svg>
        <svg viewBox="0 0 40 28" className="ml-6 w-10 h-7"><path d="M12 6h24v20H10M36 12h3v8h-3" fill="none" stroke="#fff" strokeWidth="2" /><path d="M14 9h19v14H10V17z" fill="#fff" /><path d="M3 0v5M8 0v5M1 5h9v6q0 4-4 4t-5-4zM6 15v12" fill="none" stroke="#fff" strokeWidth="2" /></svg>
        <svg viewBox="0 0 32 32" className="ml-[26px] w-8 h-8" fill="none" stroke="#fff" strokeWidth="2"><path d="M1 31Q2 4 31 1M9 31q1-20 22-22M17 31q1-12 14-13" /><circle cx="28" cy="28" r="3" fill="#fff" /></svg>
        <svg viewBox="0 0 42 36" className="ml-[22px] w-[42px] h-9" fill="none" stroke="#fff" strokeWidth="2"><path d="M1 12h6l8-8v28l-8-8H1zM20 12q4 6 0 12" /><path d="M26 7q8 11 0 22M33 2q12 16 0 32" stroke="#777" /></svg>
        <svg viewBox="0 0 38 38" className="ml-4 w-[38px] h-[38px]"><circle cx="19" cy="19" r="19" fill="#8b8b8b" /><path d="M11 11l16 16M27 11L11 27" stroke="#111" strokeWidth="4" /></svg>
        <span className="ml-[35px] w-[38px] h-[38px] bg-white text-black font-bold text-[36px] leading-[38px] text-center font-['Noto_Sans_CJK_KR',sans-serif]">한</span>
        <div className="ml-10 w-[140px] text-center leading-[47px]">
          <p>8:41 PM</p>
          <p>1/20/2018</p>
        </div>
        <svg viewBox="0 0 40 40" className="ml-11 w-10 h-10" fill="none" stroke="#fff" strokeWidth="2"><path d="M1 1h38v32H25l-5 6-5-6H1z" /></svg>
        <span className="ml-[51px] mr-[10px] w-[2px] h-full bg-[#555]" />
      </div>
    </div>
  );
}

export default function App() {
  return (
    <div className="h-screen flex flex-col overflow-hidden font-['Open_Sans','Noto_Sans',sans-serif] text-[28px] leading-10 text-[#444]">
      <TitleBar />
      <MenuBar />
      <Ribbon />
      <div className="flex-1 min-h-0 flex">
        <ModelTree />
        <Viewport />
      </div>
      <StatusBar />
      <Taskbar />
    </div>
  );
}
